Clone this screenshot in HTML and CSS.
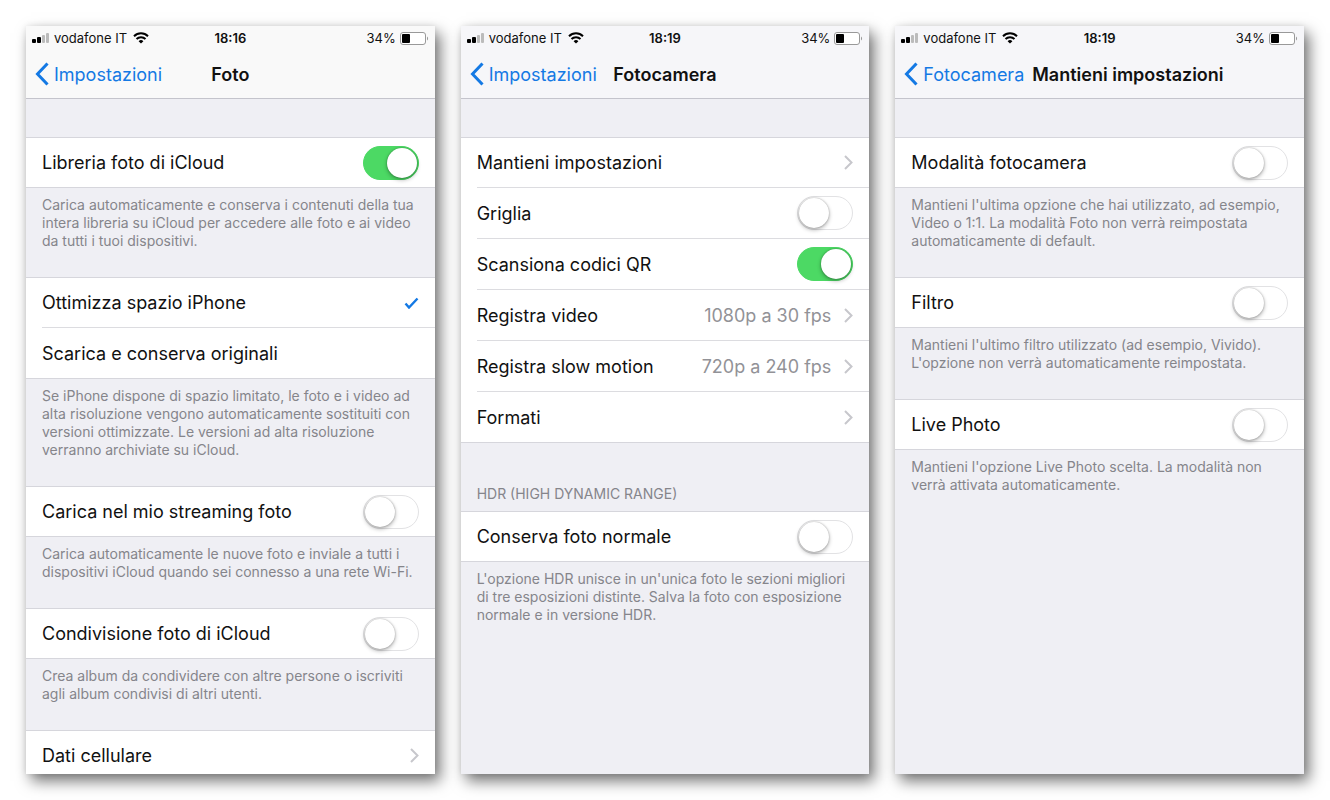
FILE: index.html
```html
<!DOCTYPE html>
<html lang="it">

<head>
    <meta charset="UTF-8">
    <meta name="viewport" content="width=device-width, initial-scale=1.0">
    <title>Impostazioni foto e fotocamera</title>
    <link rel="stylesheet" href="styles.css">
</head>

<body>
    <!-- icone condivise -->
    <svg class="sprite" aria-hidden="true">
        <symbol id="signal" viewBox="0 0 18 11">
            <rect x="0" y="6" width="4" height="4" rx="1" />
            <rect x="5" y="4" width="4" height="6" rx="1" />
            <rect x="10" y="2" width="3" height="8" rx="1" fill="#bbb" />
            <rect x="14" y="0" width="3" height="10" rx="1" fill="#bbb" />
        </symbol>
        <symbol id="wifi" viewBox="0 0 16 12">
            <path d="M1 4.2a10 10 0 0 1 14 0M3.5 7a6.4 6.4 0 0 1 9 0" fill="none" stroke="#000" stroke-width="2" />
            <path d="M5.6 9.2a3.4 3.4 0 0 1 4.8 0L8 11.6z" />
        </symbol>
        <symbol id="battery" viewBox="0 0 29 13">
            <rect x="0.5" y="0.5" width="25" height="12" rx="2.5" fill="#fff" stroke="#999" />
            <rect x="2" y="2" width="8" height="9" rx="1" />
            <path d="M27 4.5c1.4.5 1.4 3.5 0 4z" fill="#999" />
        </symbol>
        <symbol id="back" viewBox="0 0 14 24">
            <path d="M12.5 1.5L2.5 12l10 10.500" fill="none" stroke="#1479e4" stroke-width="3" />
        </symbol>
        <symbol id="chevron" viewBox="0 0 9 15">
            <path d="M1 1l6.500 6.500L1 14" fill="none" stroke="#c7c7cc" stroke-width="2" />
        </symbol>
        <symbol id="check" viewBox="0 0 15 12">
            <path d="M1.500 6.500l3.500 4L13.500 1.500" fill="none" stroke="#1479e4" stroke-width="2.400" />
        </symbol>
    </svg>

    <main class="screens">
        <section class="screen">
            <header class="bar bar-light">
                <div class="status">
                    <span class="carrier"><svg class="signal"><use href="#signal" /></svg>vodafone IT<svg class="wifi"><use href="#wifi" /></svg></span>
                    <span class="time">18:16</span>
                    <span class="power">34%<svg class="battery"><use href="#battery" /></svg></span>
                </div>
                <nav class="nav">
                    <a class="back" href="#"><svg><use href="#back" /></svg>Impostazioni</a>
                    <h1>Foto</h1>
                </nav>
            </header>

            <div class="group">
                <label class="row">Libreria foto di iCloud<input class="switch" type="checkbox" checked></label>
            </div>
            <p class="note">Carica automaticamente e conserva i contenuti della tua<br>intera libreria su iCloud per accedere alle foto e ai video<br>da tutti i tuoi dispositivi.</p>

            <div class="group">
                <label class="row">Ottimizza spazio iPhone<input class="option" type="radio" name="storage" checked><svg class="check"><use href="#check" /></svg></label>
                <label class="row">Scarica e conserva originali<input class="option" type="radio" name="storage"><svg class="check"><use href="#check" /></svg></label>
            </div>
            <p class="note">Se iPhone dispone di spazio limitato, le foto e i video ad<br>alta risoluzione vengono automaticamente sostituiti con<br>versioni ottimizzate. Le versioni ad alta risoluzione<br>verranno archiviate su iCloud.</p>

            <div class="group">
                <label class="row">Carica nel mio streaming foto<input class="switch" type="checkbox"></label>
            </div>
            <p class="note">Carica automaticamente le nuove foto e inviale a tutti i<br>dispositivi iCloud quando sei connesso a una rete Wi-Fi.</p>

            <div class="group">
                <label class="row">Condivisione foto di iCloud<input class="switch" type="checkbox"></label>
            </div>
            <p class="note">Crea album da condividere con altre persone o iscriviti<br>agli album condivisi di altri utenti.</p>

            <div class="group">
                <a class="row" href="#">Dati cellulare<svg class="chevron"><use href="#chevron" /></svg></a>
            </div>
        </section>

        <section class="screen">
            <header class="bar">
                <div class="status">
                    <span class="carrier"><svg class="signal"><use href="#signal" /></svg>vodafone IT<svg class="wifi"><use href="#wifi" /></svg></span>
                    <span class="time">18:19</span>
                    <span class="power">34%<svg class="battery"><use href="#battery" /></svg></span>
                </div>
                <nav class="nav">
                    <a class="back" href="#"><svg><use href="#back" /></svg>Impostazioni</a>
                    <h1>Fotocamera</h1>
                </nav>
            </header>

            <div class="group">
                <a class="row" href="#">Mantieni impostazioni<svg class="chevron"><use href="#chevron" /></svg></a>
                <label class="row">Griglia<input class="switch" type="checkbox"></label>
                <label class="row">Scansiona codici QR<input class="switch" type="checkbox" checked></label>
                <a class="row" href="#">Registra video<span class="value">1080p a 30 fps</span><svg class="chevron"><use href="#chevron" /></svg></a>
                <a class="row" href="#">Registra slow motion<span class="value">720p a 240 fps</span><svg class="chevron"><use href="#chevron" /></svg></a>
                <a class="row" href="#">Formati<svg class="chevron"><use href="#chevron" /></svg></a>
            </div>

            <h2 class="heading">HDR (HIGH DYNAMIC RANGE)</h2>
            <div class="group">
                <label class="row">Conserva foto normale<input class="switch" type="checkbox"></label>
            </div>
            <p class="note">L'opzione HDR unisce in un'unica foto le sezioni migliori<br>di tre esposizioni distinte. Salva la foto con esposizione<br>normale e in versione HDR.</p>
        </section>

        <section class="screen">
            <header class="bar">
                <div class="status">
                    <span class="carrier"><svg class="signal"><use href="#signal" /></svg>vodafone IT<svg class="wifi"><use href="#wifi" /></svg></span>
                    <span class="time">18:19</span>
                    <span class="power">34%<svg class="battery"><use href="#battery" /></svg></span>
                </div>
                <nav class="nav">
                    <a class="back" href="#"><svg><use href="#back" /></svg>Fotocamera</a>
                    <h1>Mantieni impostazioni</h1>
                </nav>
            </header>

            <div class="group">
                <label class="row">Modalità fotocamera<input class="switch" type="checkbox"></label>
            </div>
            <p class="note">Mantieni l'ultima opzione che hai utilizzato, ad esempio,<br>Video o 1:1. La modalità Foto non verrà reimpostata<br>automaticamente di default.</p>

            <div class="group">
                <label class="row">Filtro<input class="switch" type="checkbox"></label>
            </div>
            <p class="note">Mantieni l'ultimo filtro utilizzato (ad esempio, Vivido).<br>L'opzione non verrà automaticamente reimpostata.</p>

            <div class="group">
                <label class="row">Live Photo<input class="switch" type="checkbox"></label>
            </div>
            <p class="note">Mantieni l'opzione Live Photo scelta. La modalità non<br>verrà attivata automaticamente.</p>
        </section>
    </main>
</body>

</html>
```
FILE: styles.css
```css
* {
    box-sizing: border-box;
}
body {
    margin: 0;
    background: #fff;
    color: #111;
    font-family: Inter, "Liberation Sans", sans-serif;
    font-size: 18px;
}
a {
    color: inherit;
    text-decoration: none;
}
.sprite {
    position: absolute;
    width: 0;
    height: 0;
}

/* schermate affiancate */
.screens {
    display: grid;
    grid-template-columns: repeat(3, 1fr);
    gap: 26px;
    height: 100vh;
    padding: 26px;
}
.screen {
    min-width: 0;
    overflow: hidden;
    background: #efeff4;
    box-shadow: 5px 7px 14px rgba(0, 0, 0, 0.55), 0 0 6px rgba(0, 0, 0, 0.08);
}

/* barra di stato e navigazione */
.bar {
    margin-bottom: 38px;
    background: #f6f6f9;
    border-bottom: 1px solid #c4c4cc;
}
.bar-light {
    background: #f9f9f9;
}
.status {
    display: grid;
    grid-template-columns: 1fr auto 1fr;
    align-items: center;
    height: 24px;
    padding: 0 6px;
    font-size: 13px;
}
.carrier, .power {
    display: flex;
    align-items: center;
    gap: 4px;
}
.power {
    justify-content: flex-end;
}
.time {
    font-weight: 600;
}
.signal {
    width: 18px;
    height: 11px;
}
.wifi {
    width: 16px;
    height: 12px;
    margin-left: 2px;
}
.battery {
    width: 29px;
    height: 13px;
}
.nav {
    display: grid;
    grid-template-columns: 1fr auto 1fr;
    align-items: center;
    height: 48px;
    padding: 0 9px;
}
.nav h1 {
    margin: 0;
    font-size: 18px;
    font-weight: 600;
    white-space: nowrap;
}
.back {
    display: flex;
    align-items: center;
    gap: 5px;
    padding-right: 8px;
    color: #1479e4;
}
.back svg {
    width: 14px;
    height: 24px;
}

/* gruppi di opzioni */
.group {
    padding-left: 16px;
    background: #fff;
    border: solid #d6d6dc;
    border-width: 1px 0;
}
.row {
    display: flex;
    align-items: center;
    height: 49px;
    padding-right: 16px;
}
.row + .row {
    height: 51px;
    border-top: 1px solid #dcdce0;
}
.row .chevron, .row .switch, .row .check {
    flex: none;
    margin-left: auto;
}
.row .value {
    margin-left: auto;
    color: #929297;
}
.row .value + .chevron {
    margin-left: 13px;
}
.chevron {
    width: 9px;
    height: 15px;
}
.note {
    margin: 0;
    padding: 8px 0 27px 16px;
    color: #85858b;
    font-size: 14px;
    line-height: 18px;
    white-space: nowrap;
}
.heading {
    margin: 0;
    padding: 42px 16px 8px;
    color: #85858b;
    font-size: 14px;
    font-weight: 400;
    line-height: 18px;
}

/* interruttore */
.switch {
    display: flex;
    width: 56px;
    height: 34px;
    margin: 0;
    padding: 1px;
    border: 1px solid #e2e2e4;
    border-radius: 17px;
    background: #fff;
    appearance: none;
}
.switch::before {
    content: "";
    width: 30px;
    height: 30px;
    border-radius: 50%;
    background: #fff;
    box-shadow: 0 2px 4px rgba(0, 0, 0, 0.3), 0 0 2px rgba(0, 0, 0, 0.3);
}
.switch:checked {
    justify-content: flex-end;
    border-color: #4cd964;
    background: #4cd964;
}

/* scelta con segno di spunta */
.option {
    width: 0;
    height: 0;
    margin: 0;
    appearance: none;
}
.check {
    width: 15px;
    height: 12px;
    visibility: hidden;
}
.option:checked + .check {
    visibility: visible;
}
```
